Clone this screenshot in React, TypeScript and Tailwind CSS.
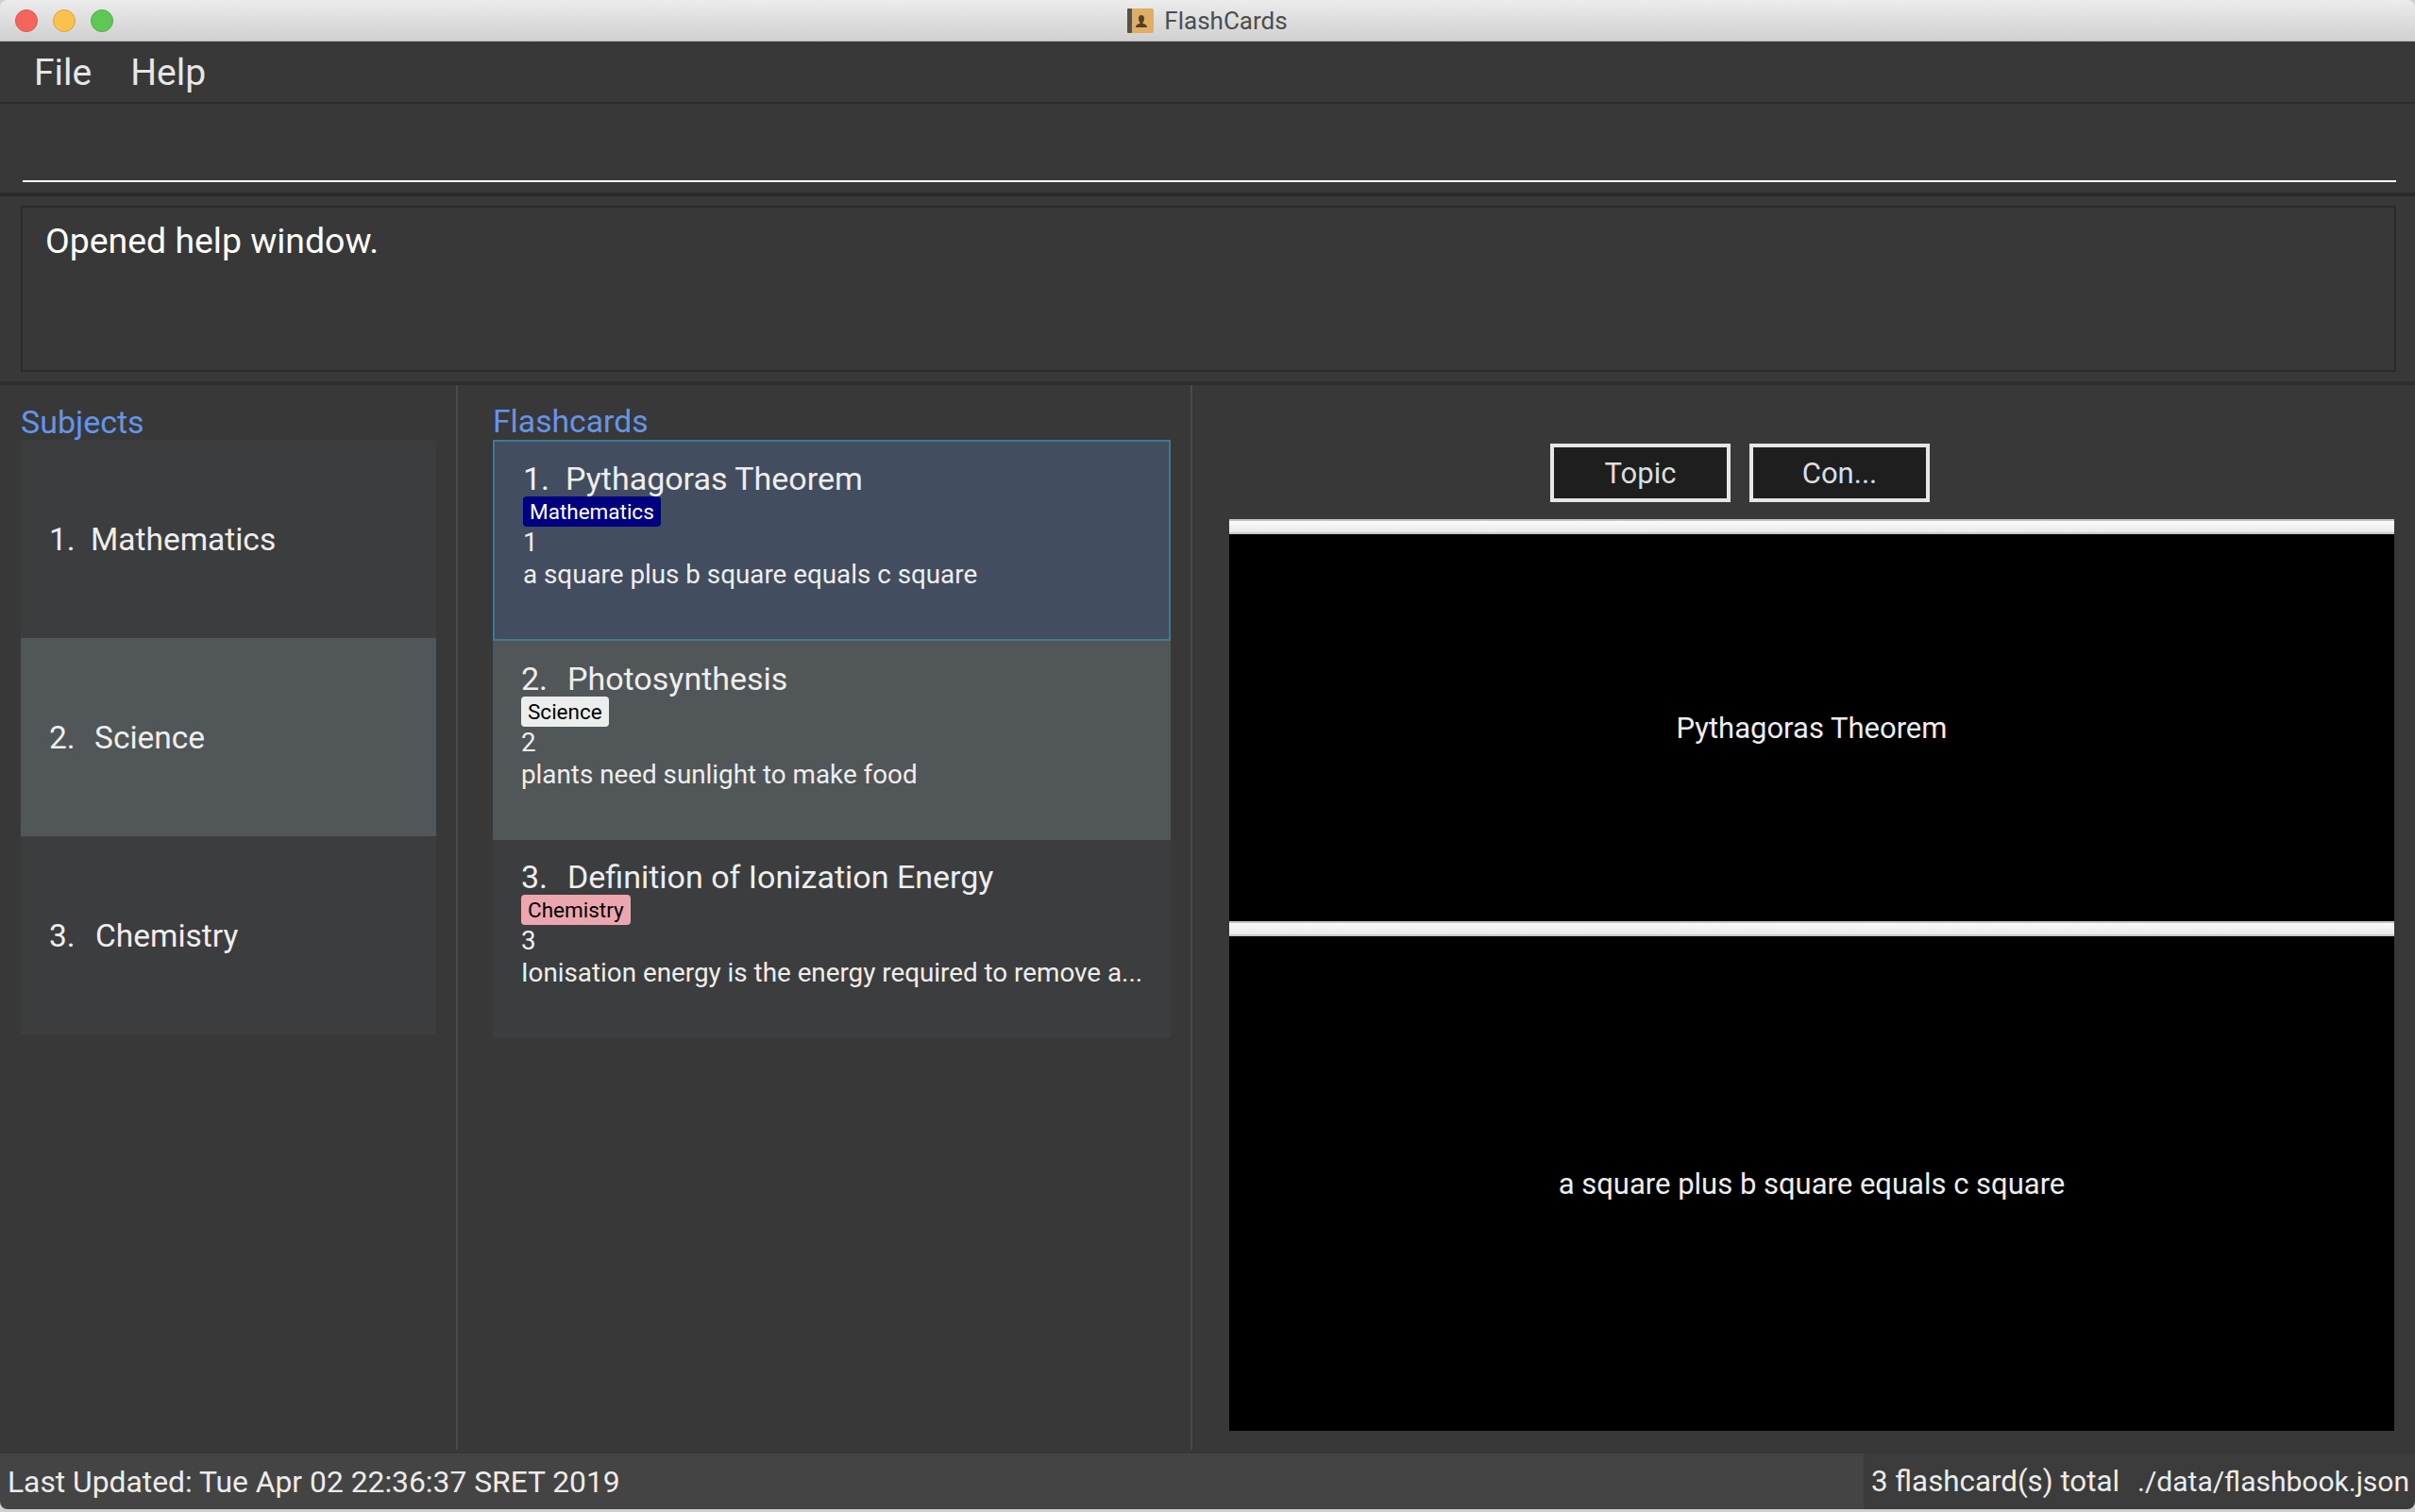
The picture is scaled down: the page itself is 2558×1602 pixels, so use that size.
const font = "font-['Roboto','Liberation_Sans',sans-serif]"

const subjects = [
  { name: 'Mathematics', bg: 'bg-[#3c3d3f]', numClass: 'w-[44px]' },
  { name: 'Science', bg: 'bg-[#515658]', numClass: 'w-[48px]' },
  { name: 'Chemistry', bg: 'bg-[#3c3d3f]', numClass: 'w-[49px]' },
]

const cards = [
  {
    title: 'Pythagoras Theorem',
    tag: 'Mathematics',
    tagClass: 'bg-[#000080] text-white',
    body: 'a square plus b square equals c square',
    numClass: 'w-[45px]',
    cellClass: 'h-[213px] bg-[#424d5f] border-2 border-[#3e7b91] pl-[30px] pt-[17px]',
  },
  {
    title: 'Photosynthesis',
    tag: 'Science',
    tagClass: 'bg-[#eceeee] text-black',
    body: 'plants need sunlight to make food',
    numClass: 'w-[49px]',
    cellClass: 'h-[211px] bg-[#515658] pl-[30px] pt-[18px]',
  },
  {
    title: 'Definition of Ionization Energy',
    tag: 'Chemistry',
    tagClass: 'bg-[#eba6ae] text-black',
    body: 'Ionisation energy is the energy required to remove a...',
    numClass: 'w-[49px]',
    cellClass: 'h-[210px] bg-[#3c3d3f] pl-[30px] pt-[17px]',
  },
]

function TitleBar() {
  return (
    <div className="relative flex h-[44px] items-center justify-center rounded-t-[8px] border-b border-[#b9b9b9] bg-gradient-to-b from-[#ececec] to-[#d0d0d0]">
      <div className="absolute left-[16px] top-[10px] flex gap-[16px]">
        <div className="h-[24px] w-[24px] rounded-full border border-[#e0534c] bg-[#f5655c]" />
        <div className="h-[24px] w-[24px] rounded-full border border-[#dfa33a] bg-[#fac14e]" />
        <div className="h-[24px] w-[24px] rounded-full border border-[#4eae42] bg-[#5fc854]" />
      </div>
      <svg width="28" height="26" viewBox="0 0 28 26" className="mr-[11px]">
        <rect x="0" y="0" width="28" height="26" rx="2" fill="#dfae62" />
        <rect x="0" y="0" width="5" height="26" rx="1" fill="#5b5043" />
        <path d="M9 20c0-3 3-3.500 5-4.500-1.500-1.500-2-3-2-5 0-2 1.200-3.500 3-3.500s3 1.500 3 3.500c0 2-.5 3.500-2 5 2 1 5 1.500 5 4.500z" fill="#4f3f28" />
      </svg>
      <span className="text-[26px] leading-none text-[#4d4d4d]">FlashCards</span>
    </div>
  )
}

export default function App() {
  return (
    <div className={`flex h-[1602px] w-[2558px] flex-col overflow-hidden bg-[#cfcfcf] ${font}`}>
      <TitleBar />

      <div className="flex h-[66px] items-center gap-[41px] border-b-2 border-[#2c2c2c] bg-[#383838] pl-[36px] pt-[2px] text-[39px] text-[#e6e6e6]">
        <span>File</span>
        <span>Help</span>
      </div>

      <div className="h-[94px] bg-[#383838] pl-[24px] pr-[20px] pt-[81px]">
        <div className="h-[2px] bg-white" />
      </div>

      <div className="h-[4px] bg-[#2a2a2a]" />

      <div className="h-[196px] bg-[#383838] pl-[22px] pr-[20px] pt-[10px]">
        <div className="h-[176px] border-2 border-[#2a2a2a] pl-[24px] pt-[13px] text-[37.400px] leading-[44px] text-white">
          Opened help window.
        </div>
      </div>

      <div className="h-[4px] bg-[#2e2e2e]" />

      <div className="flex h-[1132px] bg-[#383838]">
        <div className="w-[483px] pl-[22px]">
          <div className="mt-[8px] h-[50px] pt-[8px] text-[34px] leading-[46px] text-[#6495ed]">Subjects</div>
          {subjects.map((s, i) => (
            <div
              key={s.name}
              className={`flex h-[210px] w-[440px] items-center pl-[30px] pt-[2px] text-[33.500px] text-[#eeeeee] ${s.bg}`}
            >
              <span className={s.numClass}>{i + 1}.</span>
              {s.name}
            </div>
          ))}
        </div>

        <div className="h-[1128px] w-[2px] bg-[#4a4a4a]" />

        <div className="w-[776px] pl-[37px]">
          <div className="mt-[8px] h-[50px] pt-[8px] text-[33.700px] leading-[46px] text-[#6495ed]">Flashcards</div>
          {cards.map((c, i) => (
            <div key={c.title} className={`w-[718px] text-[#eeeeee] ${c.cellClass}`}>
              <div className="flex text-[34px] leading-[44px]">
                <span className={c.numClass}>{i + 1}.</span>
                {c.title}
              </div>
              <div className={`mt-[-3px] inline-block rounded-[4px] px-[7px] text-[22.500px] leading-[32px] ${c.tagClass}`}>
                {c.tag}
              </div>
              <div className="text-[27.800px] leading-[34px]">{i + 1}</div>
              <div className="text-[27.800px] leading-[34px]">{c.body}</div>
            </div>
          ))}
        </div>

        <div className="h-[1128px] w-[2px] bg-[#4a4a4a]" />

        <div className="flex-1 pl-[39px] pr-[22px]">
          <div className="mt-[62px] flex h-[62px] gap-[20px] pl-[340px]">
            <button className="h-[62px] w-[191px] border-4 border-[#e6e6e6] bg-[#1e1e1e] pt-[2px] text-[31px] text-[#dddddd]">
              Topic
            </button>
            <button className="h-[62px] w-[191px] border-4 border-[#e6e6e6] bg-[#1e1e1e] pt-[2px] text-[31px] text-[#dddddd]">
              Con...
            </button>
          </div>
          <div className="mt-[18px] h-[16px] border-t-2 border-b-2 border-t-[#c4c4c4] border-b-[#c8c8c8] bg-gradient-to-b from-[#fafafa] to-[#e8e8e8]" />
          <div className="flex h-[410px] items-center justify-center bg-black pt-[2px] text-[31px] text-[#eeeeee]">
            Pythagoras Theorem
          </div>
          <div className="h-[16px] border-t-2 border-b-2 border-t-[#c4c4c4] border-b-[#c8c8c8] bg-gradient-to-b from-[#fafafa] to-[#e8e8e8]" />
          <div className="flex h-[524px] items-center justify-center bg-black pt-[2px] text-[31px] text-[#eeeeee]">
            a square plus b square equals c square
          </div>
        </div>
      </div>

      <div className="flex h-[59px] overflow-hidden rounded-b-[8px] text-[31.800px] leading-[46px] text-[#ececec]">
        <div className="flex w-[1974px] items-center bg-[#444444] pl-[8px]">
          Last Updated: Tue Apr 02 22:36:37 SRET 2019
        </div>
        <div className="flex flex-1 items-center justify-between whitespace-nowrap bg-[#3c3c3c] pl-[8px] pr-[6px] text-[31.300px]">
          <span>3 flashcard(s) total</span>
          <span className="text-[30px]">./data/flashbook.json</span>
        </div>
      </div>
    </div>
  )
}
